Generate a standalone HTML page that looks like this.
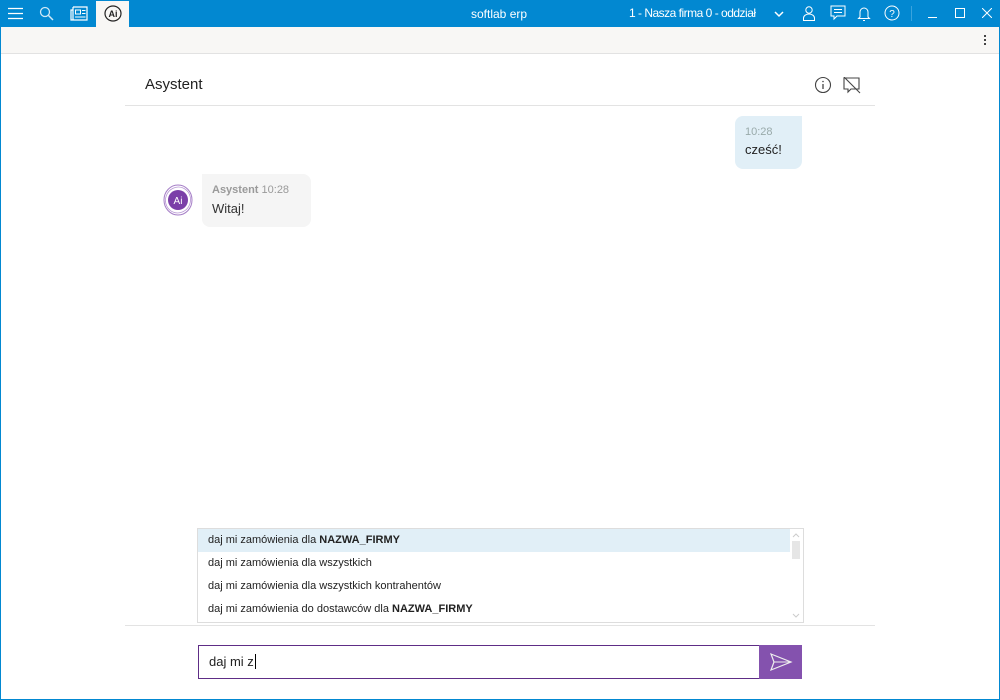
<!DOCTYPE html>
<html><head><meta charset="utf-8"><style>
*{box-sizing:border-box;margin:0;padding:0}
body{width:1000px;height:700px;overflow:hidden;background:#fff;font-family:"Liberation Sans",sans-serif;position:relative;color:#222}
.frame{position:absolute;inset:0;border:1px solid #0288d1;border-top:none}
.title{position:absolute;left:0;top:0;width:1000px;height:27px;background:#0288d1;color:#fff}
.tb{position:absolute;left:1px;top:27px;width:998px;height:27px;background:#f8f7f5;border-bottom:1px solid #e2e2e2}
.abs{position:absolute}
.sugg{position:absolute;left:197px;top:528px;width:607px;height:95px;border:1px solid #ddd;background:#fff;font-size:11px}
.sugg div{height:23px;line-height:22px;padding-left:10px;width:592px}
</style></head><body>
<div class="title">
 <svg class="abs" style="left:8px;top:7px" width="16" height="13"><path d="M0 1.5h15M0 6.5h15M0 11.5h15" stroke="#fff" stroke-width="1.3"/></svg>
 <svg class="abs" style="left:39px;top:6px" width="16" height="16"><circle cx="6" cy="6" r="4.5" fill="none" stroke="#cfe8f6" stroke-width="1.3"/><path d="M9.5 9.5l4.5 4.5" stroke="#cfe8f6" stroke-width="1.5"/></svg>
 <svg class="abs" style="left:70px;top:6px" width="18" height="15"><path d="M3 1h14v13H1V4h2v10M3 1v13" fill="none" stroke="#fff" stroke-width="1.2"/><rect x="5.5" y="4" width="5" height="4" fill="none" stroke="#fff"/><path d="M12 4.5h3.5M12 7.5h3.5M5 11h10.5" stroke="#fff"/></svg>
 <div class="abs" style="left:96px;top:1px;width:33px;height:26px;background:#f8f7f5"></div>
 <svg class="abs" style="left:103px;top:4px" width="20" height="20"><ellipse cx="10" cy="9.5" rx="8" ry="7.5" fill="none" stroke="#222" stroke-width="1.2"/><text x="10" y="13" font-size="9" font-weight="bold" text-anchor="middle" fill="#222" font-family="Liberation Sans">Ai</text></svg>
 <div class="abs" style="left:471px;top:7px;font-size:12px">softlab erp</div>
 <div class="abs" style="left:629px;top:6px;font-size:12px;letter-spacing:-0.5px">1 - Nasza firma 0 - oddział</div>
 <svg class="abs" style="left:774px;top:10px" width="10" height="8"><path d="M1 2l4 4 4-4" fill="none" stroke="#fff" stroke-width="1.5"/></svg>
 <svg class="abs" style="left:802px;top:5px" width="14" height="17"><circle cx="7" cy="5" r="3.2" fill="none" stroke="#fff"/><path d="M1.5 15.5v-2.5a5.5 4 0 0 1 11 0v2.5z" fill="none" stroke="#fff"/></svg>
 <svg class="abs" style="left:830px;top:5px" width="16" height="16"><path d="M1 1h14v10H7l-3 3v-3H1z" fill="none" stroke="#fff"/><path d="M4 4.5h8M4 7.5h8" stroke="#fff"/></svg>
 <svg class="abs" style="left:857px;top:5px" width="14" height="17"><path d="M3 12V7a4 4 0 0 1 8 0v5l1.5 1.5h-11z" fill="none" stroke="#fff"/><path d="M6 15.5h2" stroke="#fff"/></svg>
 <svg class="abs" style="left:884px;top:5px" width="16" height="16"><circle cx="8" cy="8" r="7" fill="none" stroke="#fff"/><text x="8" y="12" font-size="10" text-anchor="middle" fill="#fff" font-family="Liberation Sans">?</text></svg>
 <div class="abs" style="left:911px;top:6px;width:1px;height:15px;background:#3aa3dd"></div>
 <div class="abs" style="left:928px;top:17px;width:9px;height:1px;background:#fff"></div>
 <div class="abs" style="left:955px;top:8px;width:10px;height:10px;border:1px solid #fff"></div>
 <svg class="abs" style="left:982px;top:8px" width="10" height="10"><path d="M0 0l10 10M10 0L0 10" stroke="#fff"/></svg>
</div>
<div class="tb"><div class="abs" style="left:983px;top:8px;width:2px;height:2px;background:#444;box-shadow:0 4px #444,0 8px #444"></div></div>
<div class="abs" style="left:145px;top:76px;font-size:15px;color:#222">Asystent</div>
<svg class="abs" style="left:814px;top:76px" width="18" height="18"><circle cx="9" cy="9" r="7.5" fill="none" stroke="#444" stroke-width="1.1"/><path d="M9 8v5" stroke="#444" stroke-width="1.3"/><circle cx="9" cy="5.5" r=".8" fill="#444"/></svg>
<svg class="abs" style="left:843px;top:77px" width="18" height="17"><path d="M1 1h15v11H8l-3 3v-3H1z" fill="none" stroke="#444" stroke-width="1.1"/><path d="M1 0l16 16" stroke="#444" stroke-width="1.1"/></svg>
<div class="abs" style="left:125px;top:105px;width:750px;height:1px;background:#e3e3e3"></div>
<div class="abs" style="left:735px;top:116px;width:67px;height:53px;background:#e1eff7;border-radius:8px 0 8px 8px;padding:10px 10px"><div style="font-size:11px;color:#9aa">10:28</div><div style="font-size:13px;margin-top:4px">cześć!</div></div>
<svg class="abs" style="left:162px;top:183px" width="32" height="34"><ellipse cx="16" cy="17" rx="14" ry="15" fill="none" stroke="#a47cc6" stroke-width="1"/><ellipse cx="16" cy="17" rx="12.5" ry="13" fill="none" stroke="#b898d4" stroke-width=".8" transform="rotate(20 16 17)"/><circle cx="16" cy="17" r="10" fill="#7b3fa8"/><text x="16" y="21" font-size="10" text-anchor="middle" fill="#fff" font-family="Liberation Sans">Ai</text></svg>
<div class="abs" style="left:202px;top:174px;width:109px;height:53px;background:#f5f5f5;border-radius:0 8px 8px 8px;padding:10px 10px"><div style="font-size:11px;color:#9a9a9a"><b style="font-weight:bold">Asystent</b> 10:28</div><div style="font-size:13px;margin-top:5px;color:#333">Witaj!</div></div>
<div class="sugg">
 <div style="background:#e1eff7">daj mi zamówienia dla <b>NAZWA_FIRMY</b></div>
 <div>daj mi zamówienia dla wszystkich</div>
 <div>daj mi zamówienia dla wszystkich kontrahentów</div>
 <div>daj mi zamówienia do dostawców dla <b>NAZWA_FIRMY</b></div>
 <div class="abs" style="left:594px;top:12px;width:8px;height:18px;background:#e6e6e6;padding:0"></div>
 <svg class="abs" style="left:594px;top:3px" width="8" height="6"><path d="M1 5l3-3 3 3" fill="none" stroke="#ccc"/></svg>
 <svg class="abs" style="left:594px;top:84px" width="8" height="6"><path d="M1 1l3 3 3-3" fill="none" stroke="#ccc"/></svg>
</div>
<div class="abs" style="left:125px;top:625px;width:750px;height:1px;background:#e3e3e3"></div>
<div class="abs" style="left:198px;top:645px;width:562px;height:34px;border:1px solid #5e2d86;font-size:13px;line-height:32px;padding-left:10px">daj mi z<span style="border-left:1px solid #000;margin-left:1px"></span></div>
<div class="abs" style="left:759px;top:645px;width:43px;height:34px;background:#8452ae"></div>
<svg class="abs" style="left:769px;top:652px" width="24" height="20"><path d="M2 2l20 8-20 8 3-8z" fill="none" stroke="#eee" stroke-width="1.2"/><path d="M5 10h17" stroke="#eee"/></svg>
<div class="frame"></div>
</body></html>
